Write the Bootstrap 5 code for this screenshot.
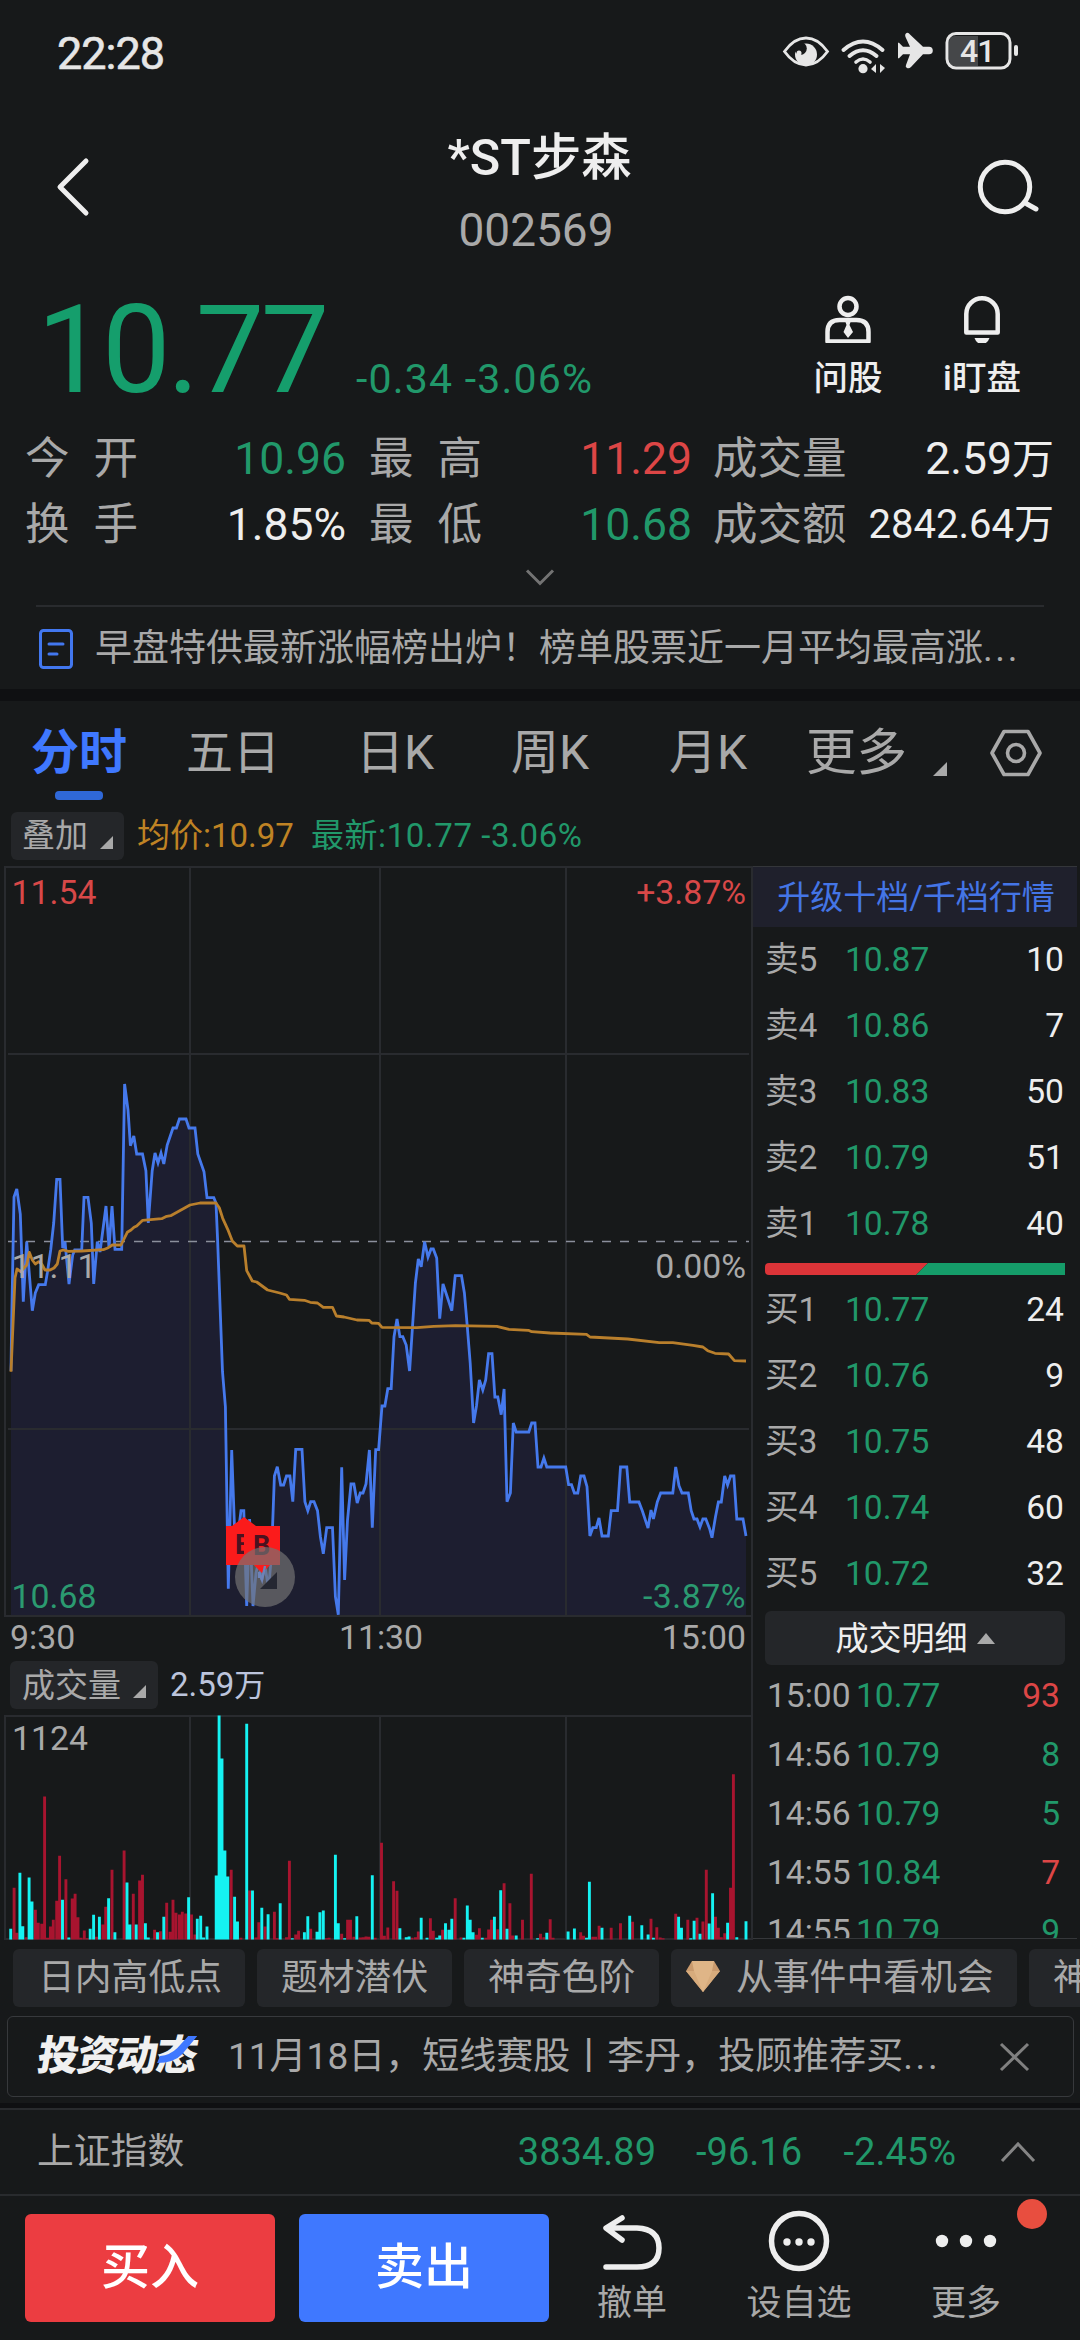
<!DOCTYPE html>
<html lang="zh-CN" data-bs-theme="dark">
<head>
<meta charset="utf-8">
<meta name="viewport" content="width=device-width, initial-scale=1">
<title>*ST步森 002569</title>
<link href="https://cdn.jsdelivr.net/npm/bootstrap@5.3.0/dist/css/bootstrap.min.css" rel="stylesheet">
<style>
:root{--bg:#17191a;--panel:#242629;--dim:#a9a9a9;--lite:#eeeeee;--up:#dd4646;--down:#21986a;--blue:#3f78ff;--rule:#292b2e}
body{width:1080px;height:2340px;overflow:hidden;background:var(--bg);color:var(--lite);font-family:Roboto,"Noto Sans CJK SC",sans-serif;font-size:33.6px;line-height:1}
svg{display:block;flex:none}
.down{color:var(--down)}.up{color:var(--up)}.dim{color:var(--dim)}.lite{color:var(--lite)}
.statusbar{height:104px;padding:0 56px 0 57px;font-size:45px;color:#e6e6e6}
.clock{letter-spacing:-1px;padding-top:3px;-webkit-text-stroke:.6px #e6e6e6}
.titlebar{height:168px;padding:0 40px 0 50px}
.titlebar>svg{margin-bottom:3px}
.stock{font-size:50.3px;font-weight:500;line-height:60px;padding-left:7px}
.code{font-size:46px;line-height:60px;margin-top:12px}
.quote{height:150px}
.price{font-size:122px;line-height:122px;color:#159e6c;padding-left:37px;width:356px;padding-top:18px;letter-spacing:-3.5px}
.delta{font-size:41px;line-height:50px;letter-spacing:1.2px;margin-top:82px}
.quick{font-size:34.5px;font-weight:500;line-height:40px}
.quick svg{margin-top:21px}
.stats{height:136px;padding-top:4px;font-size:44.5px}
.stats>div{height:66px;padding:0 26px 0 25px}
.lab{width:113px;color:var(--dim)}
.v1{width:208px}.v2{width:210px}
.more{height:47px}
.newsline{margin:0 36px;height:84px;border-top:2px solid var(--rule);font-size:37px;color:var(--dim);padding:1px 0 0 3px}
.dots{letter-spacing:2.6px}
.band{height:12px;background:#0f1012}
.tabs{height:111px;padding-bottom:8px;font-size:48px;color:var(--dim)}
.tabs span{position:relative;line-height:60px;white-space:nowrap}
.tabs .on{color:var(--blue);font-weight:700;font-size:48px}
.tabs .on::after{content:"";position:absolute;left:24px;bottom:-17px;width:48px;height:9px;border-radius:4px;background:#2f68d8}
.overlay{height:54px;padding-left:11px;font-size:33px;line-height:48px}
.chip{background:var(--panel);border-radius:6px;color:var(--dim)}
.avg{color:#bf8324}
.market{height:1074px}
.plots{width:753px}
.plots text{font-family:Roboto,"Noto Sans CJK SC",sans-serif}
.volhead{height:54px;padding-left:10px;font-size:33px;border-right:2px solid #292b2f}
.book{width:327px;padding-right:3px}
.bookhead{height:61px;background:#1f202c;border-top:1px solid #34363a;color:#4475e6;font-size:33px;padding-left:2px}
.lvl{height:66px;padding:0 13px 0 12px}
.lvl .k{width:80px;color:var(--dim)}
.ratio{height:12px;margin:6px 12px 2px;border-radius:4px;overflow:hidden}
.dealbtn{height:54px;margin:4px 12px 0;font-size:33px;background:var(--panel);border-radius:6px}
.deals{overflow:hidden;height:274px;border-bottom:1px solid #35373a;padding-top:1px}
.deal{height:59px;padding:0 17px 0 14px}
.deal .k{width:89px;color:var(--dim)}
.chips{height:76px;padding:9px 0 0 13px;gap:12px;overflow:hidden;font-size:36.8px}
.chips .chip{height:58px;flex:none;padding:0 25px;white-space:nowrap}
.notice{height:81px;margin:0 6px 0 7px;border:1px solid #37393c;border-radius:6px;font-size:37px;color:var(--dim);padding:0 43px 0 30px}
.brandmark{font-weight:900;font-size:41px;letter-spacing:-1.5px;color:#f0f0f0;transform:skewX(-9deg);width:190px;white-space:nowrap;position:relative}
.brandmark svg{position:absolute;left:120px;top:-1px}
.band2{height:5px;background:#0f1012;margin-top:6px}
.index{height:88px;border-top:2px solid var(--rule);border-bottom:2px solid var(--rule);padding:0 44px 0 37px;font-size:36.8px}
.index .n{font-size:38px}
.trade{height:144px;padding:18px 0 0 25px}
.trade .btn{width:250px;height:108px;border:0;border-radius:6px;font-size:49px;color:#fff;font-weight:500;margin-right:24px}
.buy{background:#ec3d41}.sell{background:#3f78ff}
.act{font-size:35px;color:var(--dim);height:110px;line-height:40px}
.reddot{position:absolute;width:30px;height:30px;border-radius:50%;background:#e84e3f;left:1017px;top:2199px}
</style>
</head>
<body>
<header>
 <div class="statusbar d-flex align-items-center justify-content-between">
  <span class="clock">22:28</span>
  <svg width="244" height="50" style="margin-bottom:2px" viewBox="780 26 244 50" fill="none" stroke="#e6e6e6">
    <path d="M784.500 51.500Q794 38 806 38T827.500 51.500Q818 65 806 65T784.500 51.500Z" stroke-width="2.800"/>
    <circle cx="806" cy="54.500" r="11" fill="#e6e6e6" stroke="none"/><circle cx="800.500" cy="48.500" r="6.300" fill="#17191a" stroke="none"/><circle cx="799" cy="53" r="2.500" fill="#e6e6e6" stroke="none"/>
    <g stroke-width="4" stroke-linecap="round"><path d="M843.500 50Q863 33 882.500 50M849.500 56Q863 44.500 876.500 56"/><path d="M856 62Q863 56 870 62" stroke-width="3.600"/></g>
    <circle cx="863" cy="68.700" r="4.600" fill="#e6e6e6" stroke="none"/>
    <path d="M876 64v9l-5-4ZM880 64v9l5-5Z" fill="#e6e6e6" stroke="none"/>
    <path d="M910 34.500 923 46.700H929a3.800 3.800 0 0 1 0 7.600H923L911 67q-2 2-4 1q-2-1-1-3L910 54.300H903L899 58.300H898V42.700H899L903 46.700H910L905.500 37q-1-3 1-4q2-.8 3.500 1.500Z" fill="#e6e6e6" stroke="none"/>
    <path d="M949 42q0-6 6-6h23v30h-23q-6 0-6-6Z" fill="#454749" stroke="none"/><rect x="947" y="33.500" width="63" height="34.500" rx="9" stroke-width="3"/>
    <rect x="1014" y="45" width="4" height="11" rx="2" fill="#e6e6e6" stroke="none"/>
    <text x="960" y="62" font-size="32" font-weight="500" fill="#e6e6e6" stroke="none" letter-spacing="-1">41</text>
  </svg>
 </div>
 <div class="titlebar d-flex align-items-center justify-content-between">
  <svg width="46" height="66" viewBox="0 0 46 66" fill="none" stroke="#eee" stroke-width="5" stroke-linecap="round" stroke-linejoin="round"><path d="M36 7 10 33 36 59"/></svg>
  <div class="text-center" style="margin-top:11px"><div class="stock">*ST步森</div><div class="code dim">002569</div></div>
  <svg width="64" height="66" viewBox="976 153 64 66" fill="none" stroke="#eee" stroke-width="5" stroke-linecap="round"><circle cx="1005" cy="186" r="24.700"/><path d="M1027 203 1036 208"/></svg>
 </div>
</header>

<section class="quote d-flex">
 <div class="price">10.77</div>
 <div class="delta down">-0.34 -3.06%</div>
 <div class="ms-auto d-flex quick">
  <div class="d-flex flex-column align-items-center" style="width:134px"><svg width="50" height="50" viewBox="823 293 50 50" fill="none" stroke="#eee" stroke-width="4.500" stroke-linejoin="round"><circle cx="848" cy="306.500" r="8.500"/><path d="M827.500 341.500V332q0-12 12-12h17q12 0 12 12v9.500Z"/><path d="M845.500 322h5l-1 3 3.500 7-5 6-4.500-6 3-7Z" fill="#eee" stroke="none"/></svg><span style="margin-top:15px">问股</span></div>
  <div class="d-flex flex-column align-items-center" style="width:134px"><svg width="50" height="50" viewBox="957 293 50 50" fill="none" stroke="#eee" stroke-width="4.500" stroke-linejoin="round"><path d="M966.300 332.500V314a15.700 15.700 0 0 1 31.400 0v18.500Z"/><path d="M974.500 338h15q-2 6-7.500 6t-7.500-6Z" fill="#eee" stroke="none"/></svg><span style="margin-top:15px">i盯盘</span></div>
  <div style="width:31px"></div>
 </div>
</section>

<section>
 <div class="stats">
  <div class="d-flex align-items-center"><span class="lab d-flex justify-content-between"><i class="fst-normal">今</i><i class="fst-normal">开</i></span><span class="v1 text-end down">10.96</span><span class="lab d-flex justify-content-between" style="margin-left:23px"><i class="fst-normal">最</i><i class="fst-normal">高</i></span><span class="v2 text-end up">11.29</span><span class="dim" style="margin-left:21px">成交量</span><span class="ms-auto">2.59<span style="font-size:42px">万</span></span></div>
  <div class="d-flex align-items-center"><span class="lab d-flex justify-content-between"><i class="fst-normal">换</i><i class="fst-normal">手</i></span><span class="v1 text-end">1.85%</span><span class="lab d-flex justify-content-between" style="margin-left:23px"><i class="fst-normal">最</i><i class="fst-normal">低</i></span><span class="v2 text-end down">10.68</span><span class="dim" style="margin-left:21px">成交额</span><span class="ms-auto" style="font-size:40px">2842.64万</span></div>
 </div>
 <div class="more d-flex justify-content-center"><svg style="margin-top:10px" width="30" height="20" viewBox="0 0 30 20" fill="none" stroke="#737373" stroke-width="3"><path d="M2 2.500 15 15.500 28 2.500"/></svg></div>
 <div class="newsline d-flex align-items-center">
  <svg width="34" height="40" viewBox="0 0 34 40" fill="none" stroke="#4277ef" stroke-width="3" stroke-linecap="round"><rect x="1.500" y="1.500" width="31" height="37" rx="3"/><path d="M10 15h14M10 25h8"/></svg>
  <span style="margin-left:22px" class="text-nowrap">早盘特供最新涨幅榜出炉！榜单股票近一月平均最高涨<span class="dots">...</span></span>
 </div>
 <div class="band"></div>
</section>

<nav class="tabs d-flex align-items-center">
 <span class="on" style="margin-left:31px;width:155px">分时</span><span style="width:170px;font-size:47px">五日</span><span style="width:155px">日K</span><span style="width:158px">周K</span><span style="width:137px">月K</span><span style="font-size:50.500px;width:127px">更多</span>
 <svg width="14" height="14" style="margin-top:32px" viewBox="0 0 14 14"><path d="M14 0V14H0Z" fill="#a9a9a9"/></svg>
 <svg width="52" height="50" style="margin-left:43px" viewBox="0 0 52 50" fill="none" stroke="#a9a9a9" stroke-width="3.600" stroke-linejoin="round"><path d="M14 3.500H38L50 25 38 46.500H14L2 25Z"/><circle cx="26" cy="25" r="8.500"/></svg>
</nav>
<div class="overlay d-flex align-items-start">
 <div class="chip d-flex" style="width:113px;height:48px;padding-left:11px">叠加<svg width="13" height="13" viewBox="0 0 13 13" style="margin:24px 0 0 12px"><path d="M13 0V13H0Z" fill="#a9a9a9"/></svg></div>
 <span class="avg" style="margin-left:13px">均价:10.97</span><span class="down" style="margin-left:17px;letter-spacing:.6px">最新:10.77 -3.06%</span>
</div>

<section class="market d-flex">
 <div class="plots d-flex flex-column">
  <svg id="price" width="753" height="795" viewBox="0 866 753 795" fill="none" font-size="33.800">
   <path id="fill" fill="#1d1e30"/>
   <g stroke="#292b2f" stroke-width="2"><path d="M5 867H752V1616H5Z"/><path d="M190 867V1616M380 867V1616M566 867V1616M8 1054H749M8 1429H749"/><path d="M752 1616V1662"/></g>
   <path d="M8 1241.500H749" stroke="#8b8f9c" stroke-width="1.400" stroke-dasharray="9 9"/>
   <polyline id="px" stroke="#4579ec" stroke-width="2.800" points="11,1371 11.700,1320 14,1197 16.800,1189 20.300,1214 23.300,1301.700 26.700,1241.700 32.300,1310.700 35.300,1293 38.700,1284.700 45.300,1284.700 47.300,1273 50.700,1250 53.700,1223 56.700,1179.300 60,1179.300 62.700,1248 65,1241.700 69,1284 72.700,1255 74.700,1250 81.700,1250 84,1197.300 88,1197.300 91.300,1223 93.700,1284 97.300,1241.700 100,1252 106,1206 109,1248 112,1206 115,1249.300 121.700,1249.300 124.600,1084 128,1110 130.400,1145.700 133.800,1136 136.700,1154 142.500,1154 145.900,1170.700 148.300,1223 152.200,1170.700 155,1153 158,1163 161,1153 163.800,1164 167.200,1145 173,1128 176.400,1128 179.400,1119 186,1119 189,1128 195,1128 197.800,1154 204,1171.700 207,1197.700 213.800,1197.700 216,1203 217.600,1240 222.500,1371.700 225.400,1406.700 228.300,1588.700 231.700,1450 234.600,1530 238,1535 241,1510.700 243.800,1510.700 246.700,1606 249.600,1519 253,1606 256,1573 259,1560 261.800,1580 265,1566 268.500,1588.700 271.500,1556 274.400,1476 277.300,1466.700 280.700,1485 283.600,1485 286.500,1476 289.900,1476 292.800,1501.700 295.700,1449.300 302,1449.300 304.900,1501.700 307.800,1510.700 310.700,1501.700 314,1501.700 317.500,1510.700 320.400,1536.700 323.300,1553.700 326.700,1527.700 332.500,1527.700 335.400,1596.700 338.300,1614.700 341.700,1467.300 344.600,1580 347.500,1520 351,1484 353.900,1484 357.200,1503 360.200,1493 363,1493 366,1484 369.400,1450 372.300,1527.700 375.700,1449.700 378.600,1449.700 382,1406 384.900,1406 387.800,1388.700 391.200,1388.700 394,1336.700 397,1319 399.900,1336.700 402.800,1336.700 406.200,1345 409.600,1371 412.500,1326.700 415.400,1283 418.300,1259 421.200,1266.700 424.600,1241.700 428,1257 431,1249 433.300,1249 436.700,1258 439.700,1318.700 443,1284 451.800,1310.700 455.200,1275.700 461.500,1275.700 464.400,1293 467.300,1326.700 470.200,1363 473.600,1423 476.500,1405.700 479.400,1380 482.800,1390 485.700,1380 488.600,1353.700 492,1353.700 494.900,1397 497.800,1397 501.200,1414.700 504.100,1389 507,1501.700 510.400,1493 513.300,1423 516.200,1432 528.800,1432 531.700,1423 535,1423 538,1467 541,1467 543.900,1458 546.800,1467 565.700,1467 568.600,1484.700 571.500,1484.700 574.400,1493 577.800,1493 580.700,1476 584,1476 587,1486.700 589.900,1536 592.800,1527.700 596.200,1527.700 599,1518 602,1536 608.300,1536 611.200,1510.700 617.500,1510.700 620.500,1467 626.800,1467 629.700,1502 638.900,1502 642.300,1510.700 648,1528 651,1510 653.400,1519 657.300,1502 660.700,1493 672.800,1493 675.700,1467 679,1485.700 682,1493 688.300,1493 691.200,1510.700 694,1519 697,1519 700,1527 702.900,1519 705.800,1519 709.600,1528.700 712,1537.700 715.500,1516.700 718.400,1502 721.300,1502 724.700,1476 727.600,1485 730.500,1476 733.900,1476 736.800,1519 743,1519 746,1536"/>
   <polyline stroke="#b97f2c" stroke-width="2.800" stroke-linejoin="round" points="11,1371.700 15,1278 17,1269 20.700,1271.700 26.700,1265 29.300,1252.300 32.300,1260 35.300,1264 38.700,1261.700 41.700,1264 45,1270 50,1270 54,1268 57.300,1264 60,1251 63.300,1250 68.300,1251.300 81.700,1251 103.300,1249.700 108.300,1247.700 112.300,1245 121,1245 127.300,1232.300 131,1230 134,1227.300 136.700,1226 142.700,1220.300 153.300,1219.300 161.700,1218.700 166.700,1216.300 170.700,1215.700 190,1205 200,1203 216,1203 219.300,1207.700 222.700,1218.300 228.300,1230.700 232.300,1241 237.300,1246 244,1246 246.700,1270.700 252.300,1281 256.700,1282 267.600,1290 279.700,1293 286.500,1295 289.400,1299.300 304.400,1300.300 310.200,1302.300 317.500,1303 323.300,1307.300 332.500,1307.300 336.400,1316 344,1317 357,1320 369,1320.300 371.800,1323 378.600,1323.300 382,1327.300 416.900,1327.700 433.800,1326.300 455.600,1325.700 496.800,1326.300 509,1329.300 528.400,1330.300 531.700,1331.700 550,1333 586.500,1334.300 590,1337 627.700,1339 659.200,1342.700 672.800,1342.700 693,1345.300 702.900,1347 707.700,1350.700 715,1353.300 728.600,1354 734.400,1360.700 746,1361"/>
   <path d="M226 1526H232L244 1517 256 1526H264V1565H226Z" fill="#fb1b1b"/><text x="235" y="1554" font-size="27" font-weight="700" fill="#4a1220">B</text>
   <path d="M244 1526H280V1565H270L262 1573 254 1565H244Z" fill="#fb1b1b"/><text x="253" y="1555" font-size="27" font-weight="700" fill="#4a1220">B</text>
   <circle cx="265" cy="1577" r="30" fill="#747474" fill-opacity=".68"/><path d="M254 1565H270L262 1573Z" fill="#fb1b1b"/><path d="M277 1572V1589H260Z" fill="#252732"/>
   <path d="M259 1578V1572L262 1580 265 1566" stroke="#6d83b8" stroke-width="2.400"/>
   <g fill="#d84848"><text x="11.500" y="904">11.54</text><text x="746" y="904" text-anchor="end">+3.87%</text></g>
   <g fill="#a9a9a9"><text x="11.500" y="1278">11.11</text><text x="746" y="1278" text-anchor="end">0.00%</text><text x="10" y="1648.500">9:30</text><text x="381" y="1648.500" text-anchor="middle">11:30</text><text x="746" y="1648.500" text-anchor="end">15:00</text></g>
   <g fill="#2b9a70"><text x="11.500" y="1608">10.68</text><text x="746" y="1608" text-anchor="end" letter-spacing=".5">-3.87%</text></g>
  </svg>
  <div class="volhead d-flex align-items-start">
   <div class="chip d-flex align-items-center" style="width:148px;height:48px;padding-left:12px">成交量<svg width="13" height="13" viewBox="0 0 13 13" style="margin:12px 0 0 12px"><path d="M13 0V13H0Z" fill="#a9a9a9"/></svg></div>
   <span style="margin-left:12px;line-height:48px;color:#bcc4dc">2.59<span style="font-size:31px">万</span></span>
  </div>
  <svg id="vol" width="753" height="225" viewBox="0 0 753 225" fill="none">
   <path d="M5 1H752V224H5ZM190 1V224M380 1V224M566 1V224" stroke="#292b2f" stroke-width="2"/>
   <text x="12" y="34.500" font-size="33.800" fill="#a9a9a9">1124</text>
   <path id="volUp" stroke="#a8142f" stroke-width="2.900"/><path id="volDown" stroke="#15f2f2" stroke-width="2.900"/>
  </svg>
 </div>
 <aside class="book">
  <div class="bookhead d-flex align-items-center justify-content-center"><span>升级十档/千档行情</span></div>
  <div id="asks"></div>
  <div class="ratio"><svg width="300" height="12"><path d="M0 0H163L151 12H0Z" fill="#dc3438"/><path d="M163 0H300V12H151Z" fill="#159c69"/></svg></div>
  <div id="bids"></div>
  <div class="dealbtn d-flex align-items-center justify-content-center"><span>成交明细</span><svg width="18" height="11" style="margin-left:9px" viewBox="0 0 18 11"><path d="M9 0 18 11H0Z" fill="#a9a9a9"/></svg></div>
  <div class="deals" id="deals"></div>
 </aside>
</section>

<div class="chips d-flex">
 <div class="chip d-flex align-items-center" style="width:232px">日内高低点</div>
 <div class="chip d-flex align-items-center" style="width:195px;padding-left:24px">题材潜伏</div>
 <div class="chip d-flex align-items-center" style="width:195px;padding-left:24px">神奇色阶</div>
 <div class="chip d-flex align-items-center" style="width:346px;padding-left:14px"><svg width="36" height="31" viewBox="0 0 36 31" style="margin:0 15px 3px 0"><path d="M7 0H29L35 10 18 31 1 10Z" fill="#c99a6d"/><path d="M1 10H35L18 31Z" fill="#d7ab7c"/><path d="M9 10H27L18 31ZM7 0H29L27 10H9Z" fill="#dfb587"/></svg>从事件中看机会</div>
 <div class="chip d-flex align-items-center" style="width:195px;padding-left:24px">神奇电波</div>
</div>
<div class="notice d-flex align-items-center">
 <span class="brandmark">投资动态<svg width="36" height="30" viewBox="0 0 36 30"><path d="M36 1H27L18 13Q12 20 2 21L0 28Q17 28 24 19Z" fill="#3f78ff"/></svg></span>
 <span class="text-nowrap">11月18日，短线赛股丨李丹，投顾推荐买<span class="dots">...</span></span>
 <svg class="ms-auto" width="31" height="30" viewBox="0 0 31 30" stroke="#808080" stroke-width="3"><path d="M2 2 29 28M29 2 2 28"/></svg>
</div>
<div class="band2"></div>
<div class="index d-flex align-items-center">
 <span class="dim">上证指数</span>
 <span class="n down text-end ms-auto">3834.89</span><span class="n down text-end" style="width:146px">-96.16</span><span class="n down text-end" style="width:154px">-2.45%</span>
 <svg width="36" height="22" style="margin-left:44px" viewBox="0 0 36 22" fill="none" stroke="#858585" stroke-width="3"><path d="M2 20 18 3 34 20"/></svg>
</div>
<footer class="trade d-flex">
 <button class="btn buy">买入</button><button class="btn sell">卖出</button>
 <div class="act d-flex flex-column align-items-center justify-content-between" style="width:118px"><svg width="64" height="58" viewBox="601 2212 64 58" fill="none" stroke="#eee" stroke-width="5.500" stroke-linecap="round" stroke-linejoin="round"><path d="M623 2216 607 2226 623 2238M608 2226H638Q660 2227 660 2246T638 2265H607"/></svg><span>撤单</span></div>
 <div class="act d-flex flex-column align-items-center justify-content-between" style="width:216px"><svg width="62" height="62" viewBox="0 0 62 62" style="margin-top:-4px"><circle cx="31" cy="31" r="27.500" fill="none" stroke="#eee" stroke-width="5.500"/><g fill="#eee"><circle cx="19" cy="32" r="3.700"/><circle cx="31" cy="32" r="3.700"/><circle cx="43" cy="32" r="3.700"/></g></svg><span>设自选</span></div>
 <div class="act d-flex flex-column align-items-center justify-content-between" style="width:118px"><svg width="62" height="54" viewBox="0 0 62 54" fill="#eee"><circle cx="7" cy="27" r="6.200"/><circle cx="31" cy="27" r="6.200"/><circle cx="55" cy="27" r="6.200"/></svg><span>更多</span></div>
</footer>
<span class="reddot"></span>

<script>
const line=document.getElementById('px').getAttribute('points').trim().split(' ');
document.getElementById('fill').setAttribute('d','M11 1616L'+line.join(' ')+' 746,1616Z');

// Volume bars: [position, top] pairs on a 1551 x 898 grid, baseline at 898
const dn='22,865 41,697 47,857 60,711 66,783 129,778 142,891 186,865 193,823 205,829 224,773 237,875 262,726 268,852 281,852 300,848 306,891 325,875 338,829 389,770 407,835 414,826 420,891 427,858 446,705 452,225 458,354 464,630 470,708 484,769 490,843 509,250 521,750 540,802 553,821 578,788 603,893 628,875 635,827 654,874 660,815 667,810 692,643 698,848 711,893 736,827 768,704 825,863 838,890 844,888 869,832 881,892 901,892 907,885 919,848 926,868 932,835 957,892 964,795 970,838 976,875 995,892 1020,829 1033,749 1046,865 1065,885 1109,893 1128,877 1172,873 1185,864 1210,892 1216,724 1242,862 1299,826 1324,854 1337,882 1348,892 1400,829 1406,862 1425,893 1432,841 1444,880 1463,849 1470,758 1501,847 1520,890 1539,842';
const up='29,742 35,877 54,890 73,808 79,847 86,850 92,468 98,892 104,858 110,838 117,781 123,646 136,716 149,774 155,760 161,830 167,892 174,870 180,893 199,889 212,852 218,799 231,688 256,630 275,760 288,720 294,703 319,868 331,872 344,787 351,874 357,778 363,817 370,822 376,814 383,819 395,822 402,882 477,688 497,892 515,750 528,891 534,845 547,858 566,814 572,893 591,890 597,661 610,882 616,871 641,865 673,893 679,892 705,880 717,838 723,838 730,889 743,891 749,890 755,888 761,889 774,892 787,607 793,886 800,861 812,722 819,751 850,892 857,890 863,873 888,833 894,871 913,868 939,773 951,891 983,883 989,863 1002,892 1008,867 1014,838 1027,866 1040,728 1052,788 1058,885 1078,838 1096,700 1115,880 1122,890 1135,836 1141,892 1198,875 1204,886 1223,889 1229,889 1236,856 1261,862 1280,848 1305,844 1343,835 1355,860 1362,891 1368,893 1394,820 1419,838 1438,832 1450,843 1457,688 1476,829 1482,862 1488,890 1495,878 1507,742 1513,401';
const bars=s=>s.split(' ').map(p=>{const[x,y]=p.split(',');return`M${(x/2.063).toFixed(1)} 224.500V${((y-225)/3+.5).toFixed(1)}`}).join('');
document.getElementById('volDown').setAttribute('d',bars(dn));
document.getElementById('volUp').setAttribute('d',bars(up));

const lvl=r=>`<div class="lvl d-flex align-items-center"><span class="k">${r[0]}</span><span class="down">${r[1]}</span><span class="ms-auto">${r[2]}</span></div>`;
asks.innerHTML=[['卖5','10.87',10],['卖4','10.86',7],['卖3','10.83',50],['卖2','10.79',51],['卖1','10.78',40]].map(lvl).join('');
bids.innerHTML=[['买1','10.77',24],['买2','10.76',9],['买3','10.75',48],['买4','10.74',60],['买5','10.72',32]].map(lvl).join('');
deals.innerHTML=[['15:00','10.77',93,'up'],['14:56','10.79',8,'down'],['14:56','10.79',5,'down'],['14:55','10.84',7,'up'],['14:55','10.79',9,'down']].map(r=>`<div class="deal d-flex align-items-center"><span class="k">${r[0]}</span><span class="down">${r[1]}</span><span class="ms-auto ${r[3]}">${r[2]}</span></div>`).join('');
</script>
<script src="https://cdn.jsdelivr.net/npm/bootstrap@5.3.0/dist/js/bootstrap.bundle.min.js"></script>
</body>
</html>
